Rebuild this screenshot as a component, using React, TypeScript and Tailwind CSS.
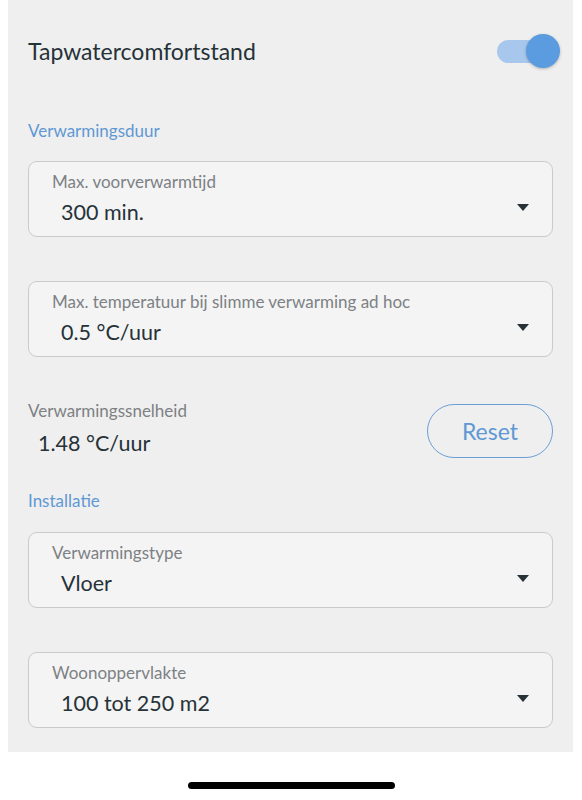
import React from 'react'

const font = "font-['Lato','Noto_Sans',sans-serif]"

function Caret() {
  return (
    <svg width="12" height="7" viewBox="0 0 12 7" aria-hidden="true">
      <path d="M0 0h12L6 7z" fill="#263238" />
    </svg>
  )
}

function SelectField({ label, value }: { label: string; value: string }) {
  return (
    <div className="flex h-[76px] items-start rounded-[9px] border border-[#c9caca] bg-[#f4f4f4]">
      <div className="flex-1 pl-[23px] pt-[10px]">
        <div className="text-[17px] leading-5 text-[#7d8184]">{label}</div>
        <div className="ml-[9px] mt-[7px] text-[21.5px] leading-[26px] text-[#263238]">{value}</div>
      </div>
      <div className="mr-[23px] mt-[42px] flex">
        <Caret />
      </div>
    </div>
  )
}

function Toggle() {
  return (
    <div className="relative -mr-[7px] h-[34px] w-[63px]">
      <div className="absolute left-0 top-[6px] h-[23px] w-[56px] rounded-full bg-[#a7c8ec]" />
      <div className="absolute right-0 top-0 h-[34px] w-[34px] rounded-full bg-[#5b9be0] shadow-[0_1px_3px_rgba(0,0,0,0.25)]" />
    </div>
  )
}

export default function App() {
  return (
    <div className={`min-h-[800px] bg-white ${font}`}>
      <div className="ml-2 w-[565px] bg-[#efefef] px-5 pb-[24px] pt-[34px]">
        <div className="flex h-[34px] items-center justify-between">
          <span className="text-[23px] leading-7 text-[#263238]">Tapwatercomfortstand</span>
          <Toggle />
        </div>

        <div className="mt-[53px] text-[17px] leading-5 text-[#5f98d4]">Verwarmingsduur</div>

        <div className="mt-[20px]">
          <SelectField label="Max. voorverwarmtijd" value="300 min." />
        </div>
        <div className="mt-[44px]">
          <SelectField label="Max. temperatuur bij slimme verwarming ad hoc" value="0.5 °C/uur" />
        </div>

        <div className="mt-[44px] flex items-start justify-between">
          <div>
            <div className="text-[17px] leading-5 text-[#7d8184]">Verwarmingssnelheid</div>
            <div className="ml-[10px] mt-[9px] text-[21.5px] leading-[26px] text-[#263238]">1.48 °C/uur</div>
          </div>
          <button
            type="button"
            className="mt-[3px] h-[54px] w-[126px] rounded-full border-[1.5px] border-[#6a9fd6] text-[23px] text-[#5f98d4]"
          >
            Reset
          </button>
        </div>

        <div className="mt-[33px] text-[17px] leading-5 text-[#5f98d4]">Installatie</div>

        <div className="mt-[21px]">
          <SelectField label="Verwarmingstype" value="Vloer" />
        </div>
        <div className="mt-[44px]">
          <SelectField label="Woonoppervlakte" value="100 tot 250 m2" />
        </div>
      </div>

      <div className="mx-auto mt-[30px] h-[7px] w-[207px] rounded-full bg-black" />
    </div>
  )
}
